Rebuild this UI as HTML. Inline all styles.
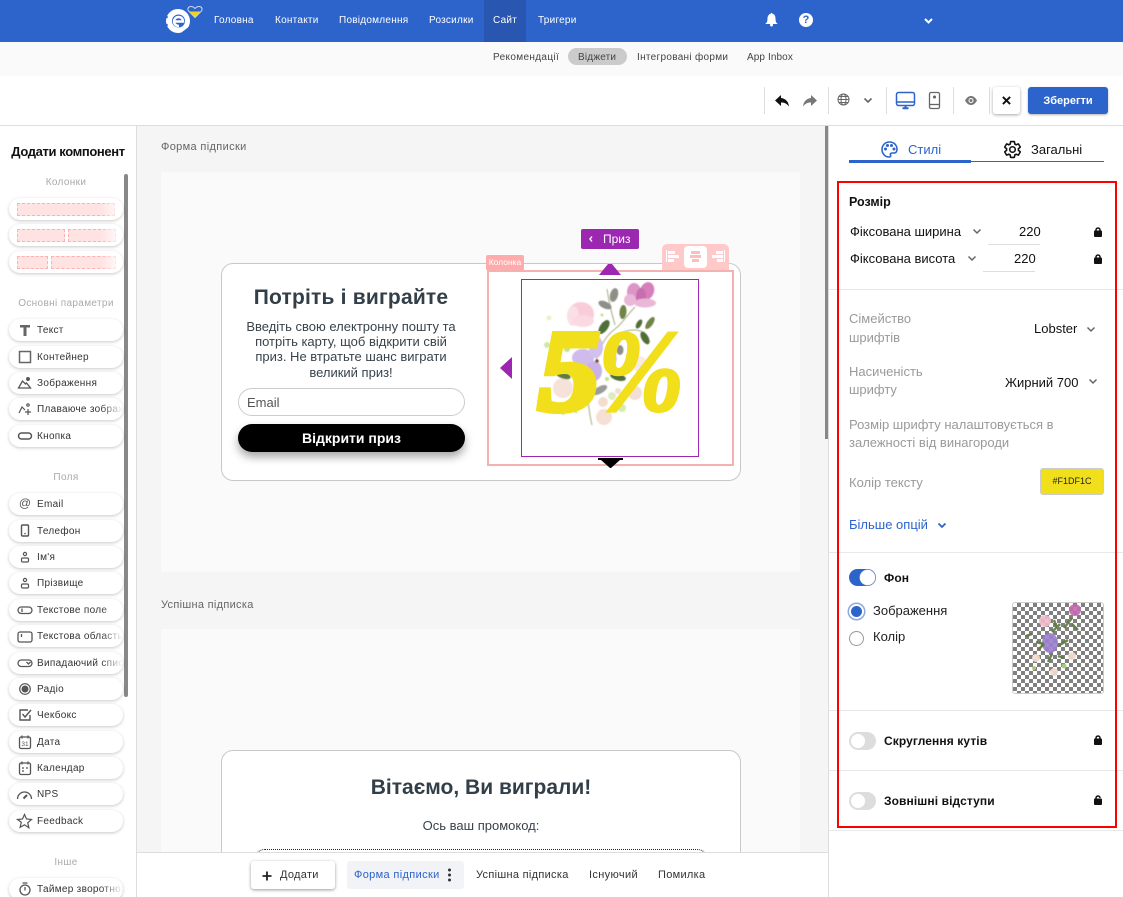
<!DOCTYPE html>
<html lang="uk"><head><meta charset="utf-8"><title>Редактор</title>
<style>
html,body{margin:0;padding:0;width:1123px;height:897px;overflow:hidden;background:#fff;font-family:"Liberation Sans",sans-serif;color:#222}
*{box-sizing:border-box}
#root{position:relative;width:1123px;height:897px;overflow:hidden}
.a{position:absolute}
.t{position:absolute;white-space:nowrap;line-height:1}
.c{transform:translateX(-50%)}
.nav{font-size:10px;color:#fff;top:16px;letter-spacing:.25px}
.sub{font-size:10px;color:#444;top:53px;letter-spacing:.35px}
.pill{position:absolute;left:9px;width:114px;height:22px;border-radius:11px;background:#fff;box-shadow:0 1px 3px rgba(0,0,0,.22);overflow:hidden}
.pill span{position:absolute;left:28px;top:7px;font-size:10px;line-height:1;color:#333;white-space:nowrap;letter-spacing:.3px}
.pill svg{position:absolute;left:8px;top:3px;width:16px;height:16px}
.head{font-size:10px;color:#aaa;left:66px;letter-spacing:.35px}
.col{position:absolute;top:5px;height:13px;background:#ffe3e3;border:1px dashed #ffb0b0}
.fade{position:absolute;right:0;top:0;width:22px;height:22px;background:linear-gradient(90deg,rgba(255,255,255,0),#fff)}
.sep{position:absolute;width:1px;top:87px;height:27px;background:#ddd}
.hr{position:absolute;left:829px;width:294px;height:1px;background:#e8e8e8}
.gray{color:#9a9a9a;font-size:13px}
.sw{position:absolute;left:849px;width:27px;height:18px;border-radius:9px;background:#ddd}
.sw i{position:absolute;left:2px;top:2px;width:14px;height:14px;border-radius:50%;background:#fff}
.bold{font-size:12px;font-weight:bold;color:#111;letter-spacing:.1px}
.b11{font-size:11px;color:#333;top:870px;letter-spacing:.3px}
</style></head><body><div id="root">

<!-- top bar -->
<div class="a" style="left:0;top:0;width:1123px;height:42px;background:#2c64cc"></div>
<div class="a" style="left:484px;top:0;width:42px;height:42px;background:#2856b0"></div>
<svg class="a" style="left:160px;top:3px" width="46" height="34" viewBox="0 0 46 34">
<circle cx="18" cy="18" r="12" fill="#fff"/>
<circle cx="18.500" cy="18" r="6.500" fill="#2c64cc"/>
<path d="M14 18.500h9c0-3-2-4.500-4.500-4.500s-4.500 2-4.500 4.500 2 4.500 5 4.500" fill="none" stroke="#fff" stroke-width="2.400"/>
<circle cx="6.500" cy="14" r="1.300" fill="#2c64cc"/><circle cx="6.500" cy="22" r="1.300" fill="#2c64cc"/>
<path d="M22 30l8-6" stroke="#2c64cc" stroke-width="1.500"/>
<path d="M35 14.500l-6.500-6.500c-1.500-2.500 0-4.500 2.500-4.500 1.800 0 3 .8 4 2 1-1.200 2.200-2 4-2 2.500 0 4 2 2.500 4.500z" fill="#2c64cc" stroke="#cfd8e8" stroke-width="1"/>
<path d="M35 14l-6-5.500h12z" fill="#f1d51c"/>
</svg>
<div class="t nav" style="left:214px">Головна</div>
<div class="t nav" style="left:275px">Контакти</div>
<div class="t nav" style="left:339px">Повідомлення</div>
<div class="t nav" style="left:429px">Розсилки</div>
<div class="t nav" style="left:493px">Сайт</div>
<div class="t nav" style="left:538px">Тригери</div>
<svg class="a" style="left:764px;top:12px" width="15" height="15" viewBox="0 0 15 15"><path d="M1 12c2-1 2.500-3 2.500-5.500S5 2 7 1.500C7 .7 8 .7 8 1.500c2.500.5 3.500 2.500 3.500 5s.5 4.500 2.500 5.500z" fill="#fff"/><circle cx="7.500" cy="13" r="1.500" fill="#fff"/></svg>
<div class="a" style="left:799px;top:13px;width:14px;height:14px;border-radius:50%;background:#fff;color:#2c64cc;font:bold 11px/14px 'Liberation Sans',sans-serif;text-align:center">?</div>
<svg class="a" style="left:923px;top:17px" width="11" height="8" viewBox="0 0 11 8"><path d="M2 2l3.500 3.500L9 2" fill="none" stroke="#fff" stroke-width="2"/></svg>

<!-- sub bar -->
<div class="a" style="left:0;top:42px;width:1123px;height:34px;background:#fafafa"></div>
<div class="a" style="left:568px;top:48px;width:59px;height:17px;border-radius:9px;background:#cbcbcb"></div>
<div class="t sub" style="left:493px">Рекомендації</div>
<div class="t sub" style="left:578px;letter-spacing:.2px">Віджети</div>
<div class="t sub" style="left:637px;letter-spacing:.3px">Інтегровані форми</div>
<div class="t sub" style="left:747px;letter-spacing:.1px">App Inbox</div>

<!-- toolbar -->
<div class="a" style="left:0;top:125px;width:1123px;height:1px;background:#ddd"></div>
<div class="sep" style="left:764px"></div>
<div class="sep" style="left:828px"></div><div class="sep" style="left:886px"></div><div class="sep" style="left:953px"></div>
<div class="sep" style="left:989px"></div>
<svg class="a" style="left:774px;top:94px" width="16" height="14" viewBox="0 0 16 14"><path d="M7 1L1 6.500 7 12V8.500c3 0 5.500.8 8 4-.5-5-3.500-8-8-8.500z" fill="#111"/></svg>
<svg class="a" style="left:802px;top:94px" width="16" height="14" viewBox="0 0 16 14"><path d="M9 1l6 5.500L9 12V8.500c-3 0-5.500.8-8 4 .5-5 3.500-8 8-8.500z" fill="#777"/></svg>
<svg class="a" style="left:837px;top:93px" width="13" height="13" viewBox="0 0 13 13" fill="none" stroke="#666"><circle cx="6.500" cy="6.500" r="5.500"/><ellipse cx="6.500" cy="6.500" rx="2.500" ry="5.500"/><path d="M1 6.500h11M2 3.500h9M2 9.500h9"/></svg>
<svg class="a" style="left:863px;top:97px" width="10" height="7" viewBox="0 0 10 7"><path d="M1.500 1.500l3.500 3.500 3.500-3.500" fill="none" stroke="#666" stroke-width="1.600"/></svg>
<svg class="a" style="left:895px;top:91px" width="21" height="19" viewBox="0 0 21 19" fill="none" stroke="#2c64cc" stroke-width="1.500"><rect x="1.500" y="1.500" width="18" height="13" rx="2"/><path d="M1.500 11h18" /><path d="M7.500 17.300h6M10.500 14.500v3" stroke-width="2"/></svg>
<svg class="a" style="left:928px;top:91px" width="13" height="19" viewBox="0 0 13 19" fill="none" stroke="#666" stroke-width="1.300"><rect x="1.500" y="1.500" width="10" height="16" rx="1.500"/><path d="M1.500 13.500h10"/><circle cx="6.500" cy="6" r=".9" fill="#666"/></svg>
<svg class="a" style="left:964px;top:95px" width="14" height="11" viewBox="0 0 14 11"><path d="M1 5.500C3 2 5 1 7 1s4 1 6 4.500C11 9 9 10 7 10S3 9 1 5.500z" fill="#777"/><circle cx="7" cy="5.500" r="2.500" fill="#fff"/><circle cx="7" cy="5.500" r="1.500" fill="#777"/></svg>
<div class="a" style="left:993px;top:87px;width:27px;height:27px;border-radius:3px;background:#fff;box-shadow:0 1px 3px rgba(0,0,0,.35)"></div>
<svg class="a" style="left:1002px;top:96px" width="9" height="9" viewBox="0 0 10 10"><path d="M1 1l8 8M9 1l-8 8" stroke="#111" stroke-width="2.200"/></svg>
<div class="a" style="left:1028px;top:87px;width:80px;height:27px;border-radius:3px;background:#2c64cc;box-shadow:0 1px 2px rgba(0,0,0,.3);color:#fff;font-size:11px;line-height:29px;text-align:center;font-weight:bold">Зберегти</div>

<!-- canvas -->
<div class="a" style="left:137px;top:126px;width:692px;height:771px;background:#f5f5f5"></div>
<div class="a" style="left:136px;top:126px;width:1px;height:771px;background:#ddd"></div>
<div class="a" style="left:828px;top:126px;width:1px;height:771px;background:#ddd"></div>
<div class="a" style="left:825px;top:126px;width:3px;height:313px;background:#888"></div>
<div class="t" style="left:161px;top:142px;font-size:11px;color:#666;letter-spacing:.35px">Форма підписки</div>
<div class="a" style="left:161px;top:172px;width:639px;height:400px;background:#fafafa"></div>
<div class="t" style="left:161px;top:600px;font-size:11px;color:#666;letter-spacing:.3px">Успішна підписка</div>
<div class="a" style="left:161px;top:629px;width:639px;height:268px;background:#fafafa"></div>

<!-- card 1 -->
<div class="a" style="left:221px;top:263px;width:520px;height:218px;background:#fff;border:1px solid #c8c8c8;border-radius:12px"></div>
<div class="t c" style="left:351px;top:287px;font-size:21px;font-weight:bold;color:#333f48;letter-spacing:.2px">Потріть і виграйте</div>
<div class="a c" style="left:351px;top:319px;width:230px;text-align:center;font-size:13px;line-height:15.200px;color:#38434c">Введіть свою електронну пошту та<br>потріть карту, щоб відкрити свій<br>приз. Не втратьте шанс виграти<br>великий приз!</div>
<div class="a" style="left:238px;top:388px;width:227px;height:28px;border:1px solid #ccc;border-radius:14px;background:#fff"></div>
<div class="t" style="left:247px;top:396px;font-size:13px;color:#555">Email</div>
<div class="a" style="left:238px;top:424px;width:227px;height:28px;border-radius:14px;background:#000;box-shadow:0 5px 9px rgba(0,0,0,.35);color:#fff;font-size:14px;font-weight:bold;text-align:center;line-height:28px">Відкрити приз</div>

<!-- selection -->
<div class="a" style="left:487px;top:270px;width:247px;height:196px;border:2px solid #f5b0b0"></div>
<div class="a" style="left:486px;top:255px;width:38px;height:15px;background:#ffabab;border-radius:2px 2px 0 0;color:#fff;font-size:8.500px;line-height:15px;text-align:center">Колонка</div>
<div class="a" style="left:662px;top:244px;width:67px;height:26px;background:#ffc9c9;border-radius:5px 5px 0 0"></div>
<div class="a" style="left:684px;top:246px;width:23px;height:22px;background:#fff;border-radius:4px"></div>
<svg class="a" style="left:666px;top:250px" width="60" height="14" viewBox="0 0 60 14"><g fill="#fff"><rect x="0" y="0" width="1" height="12"/><rect x="2" y="1" width="7" height="3"/><rect x="2" y="5" width="11" height="3"/><rect x="2" y="9" width="6" height="3"/><rect x="58" y="0" width="1" height="12"/><rect x="50" y="1" width="7" height="3"/><rect x="46" y="5" width="11" height="3"/><rect x="51" y="9" width="6" height="3"/></g><g fill="#ffbcbc"><rect x="25" y="1" width="9" height="3"/><rect x="24" y="5" width="11" height="3"/><rect x="26" y="9" width="7" height="3"/></g></svg>
<div class="a" style="left:581px;top:229px;width:58px;height:20px;background:#9c27b0;border-radius:2px;color:#fff;font-size:12px;line-height:20px;padding-left:22px;">Приз</div>
<svg class="a" style="left:588px;top:235px" width="6" height="8" viewBox="0 0 6 8"><path d="M4 1.500L2 4l2 2.500" fill="none" stroke="#fff" stroke-width="1.400"/></svg>

<!-- image -->
<svg class="a" style="left:521px;top:279px" width="178" height="178" viewBox="0 0 178 178">
<rect x=".5" y=".5" width="177" height="177" fill="#fff" stroke="#9c27b0"/>
<defs><filter id="b" x="-10%" y="-10%" width="120%" height="120%"><feGaussianBlur stdDeviation=".5"/></filter></defs>
<g filter="url(#b)">
<circle cx="28" cy="39" r="2.500" fill="#e6f2cc"/><circle cx="26" cy="66" r="3" fill="#cfe8a8"/><circle cx="46" cy="70" r="3" fill="#c3e28a"/><circle cx="81" cy="36" r="1.500" fill="#c3e28a"/>
<circle cx="86" cy="100" r="2" fill="#c3e28a"/><circle cx="91" cy="117" r="4" fill="#dcecc0"/><circle cx="101" cy="129" r="4" fill="#d5eab0"/><circle cx="42" cy="133" r="3" fill="#d5eab0"/><circle cx="55" cy="133" r="1.500" fill="#cfe8a8"/>
<circle cx="114" cy="114" r="7" fill="#f4dfd4"/><circle cx="82" cy="123" r="5" fill="#f3ddd0"/><circle cx="83" cy="138" r="8" fill="#f5e0d5"/><circle cx="97" cy="112" r="3" fill="#f3ddd0"/><circle cx="42" cy="109" r="10" fill="#f6e2d8"/><circle cx="118" cy="85" r="8" fill="#f8ebe5"/>
<path d="M67 122c1 8 2 16 4 24M72 100c2-20 8-40 22-50 8-6 12-14 20-22M86 10c2 14 4 22 8 36M94 56c10-4 20-8 30-2" stroke="#a8ab80" fill="none"/>
<ellipse cx="93" cy="16" rx="4" ry="7" transform="rotate(15 93 16)" fill="#8d8f88"/>
<ellipse cx="84" cy="26" rx="7" ry="3.500" transform="rotate(25 84 26)" fill="#8d8f88"/>
<ellipse cx="102" cy="33" rx="3.500" ry="7" transform="rotate(5 102 33)" fill="#6f8446"/>
<ellipse cx="83" cy="48" rx="4" ry="8" transform="rotate(35 83 48)" fill="#4f6e38"/>
<ellipse cx="118" cy="45" rx="2.500" ry="5" transform="rotate(30 118 45)" fill="#4f6e38"/>
<ellipse cx="129" cy="44" rx="3" ry="7" transform="rotate(35 129 44)" fill="#6f8446"/>
<ellipse cx="124" cy="59" rx="3.500" ry="7" transform="rotate(-30 124 59)" fill="#4f6e38"/>
<ellipse cx="99" cy="71" rx="3.500" ry="5" fill="#8d8f88"/>
<ellipse cx="97" cy="98" rx="8" ry="3.500" transform="rotate(15 97 98)" fill="#4f6e38"/>
<ellipse cx="79" cy="111" rx="8" ry="3.500" transform="rotate(-30 79 111)" fill="#9a9c9a"/>
<ellipse cx="42" cy="96" rx="8" ry="3.500" transform="rotate(20 42 96)" fill="#5e7c3c"/>
<ellipse cx="60" cy="35" rx="13" ry="12" fill="#f8cdd8"/><ellipse cx="52" cy="37" rx="6" ry="10" fill="#fbdfe6"/><ellipse cx="62" cy="42" rx="11" ry="6" fill="#fad9e2"/>
<ellipse cx="113" cy="13" rx="7" ry="9" fill="#dd95c8"/><ellipse cx="126" cy="12" rx="7" ry="9" transform="rotate(20 126 12)" fill="#d77fbc"/><ellipse cx="120" cy="18" rx="5" ry="9" fill="#c86daf"/><ellipse cx="124" cy="24" rx="11" ry="4.500" fill="#ebb7d6"/><ellipse cx="109" cy="21" rx="6" ry="6" fill="#e8b8d6"/>
<ellipse cx="62" cy="79" rx="11" ry="9" fill="#cfbcec"/><ellipse cx="75" cy="68" rx="7" ry="11" fill="#d2c0ee"/><ellipse cx="73" cy="92" rx="8" ry="10" fill="#c8b2e7"/><ellipse cx="90" cy="80" rx="6" ry="7" fill="#dccff2"/><circle cx="76" cy="82" r="1.800" fill="#8a4a2a"/>
</g>
<text x="17" y="131" font-family="Liberation Serif,serif" font-weight="bold" font-style="italic" font-size="116" fill="#f1df1c" stroke="#f1df1c" stroke-width="6" textLength="62" lengthAdjust="spacingAndGlyphs">5</text>
<text x="77" y="131" font-family="Liberation Serif,serif" font-weight="bold" font-style="italic" font-size="116" fill="#f1df1c" stroke="#f1df1c" stroke-width="3" textLength="86" lengthAdjust="spacingAndGlyphs">%</text>
</svg>
<svg class="a" style="left:599px;top:263px" width="22" height="12" viewBox="0 0 22 12"><path d="M0 12L9 1h4l9 11z" fill="#9c27b0"/></svg>
<svg class="a" style="left:500px;top:357px" width="12" height="22" viewBox="0 0 12 22"><path d="M12 0v22L0 11z" fill="#9c27b0"/></svg>
<svg class="a" style="left:598px;top:458px" width="25" height="11" viewBox="0 0 25 11"><path d="M0 0h25v2h-3l-9 8h-1L3 2H0z" fill="#000"/></svg>

<!-- card 2 -->
<div class="a" style="left:221px;top:750px;width:520px;height:140px;background:#fff;border:1px solid #c8c8c8;border-radius:12px"></div>
<div class="t c" style="left:481px;top:777px;font-size:21px;font-weight:bold;color:#333f48">Вітаємо, Ви виграли!</div>
<div class="t c" style="left:481px;top:819px;font-size:13px;color:#38434c">Ось ваш промокод:</div>
<div class="a" style="left:253px;top:849px;width:456px;height:40px;border:1px dotted #222;border-radius:12px"></div>

<!-- bottom bar -->
<div class="a" style="left:137px;top:852px;width:691px;height:45px;background:#fff;border-top:1px solid #ddd"></div>
<div class="a" style="left:251px;top:861px;width:84px;height:28px;border-radius:3px;background:#fff;box-shadow:0 1px 3px rgba(0,0,0,.4)"></div>
<svg class="a" style="left:262px;top:871px" width="10" height="10" viewBox="0 0 10 10"><path d="M5 .5v9M.5 5h9" stroke="#222" stroke-width="1.800"/></svg>
<div class="t b11" style="left:280px">Додати</div>
<div class="a" style="left:347px;top:861px;width:117px;height:28px;border-radius:3px;background:#f1f3f6"></div>
<div class="t b11" style="left:354px;color:#2c64cc;letter-spacing:.35px">Форма підписки</div>
<svg class="a" style="left:447px;top:868px" width="5" height="14" viewBox="0 0 5 14"><g fill="#333"><circle cx="2.500" cy="2" r="1.500"/><circle cx="2.500" cy="7" r="1.500"/><circle cx="2.500" cy="12" r="1.500"/></g></svg>
<div class="t b11" style="left:476px">Успішна підписка</div>
<div class="t b11" style="left:589px;letter-spacing:.35px">Існуючий</div>
<div class="t b11" style="left:658px">Помилка</div>

<!-- left panel -->
<div class="t c" style="left:68px;top:145px;font-size:13px;font-weight:bold;color:#111;letter-spacing:-.38px">Додати компонент</div>
<div class="a" style="left:124px;top:174px;width:4px;height:523px;background:#888;border-radius:2px"></div>
<div class="t c head" style="top:178px">Колонки</div>
<div class="pill" style="top:198px"><div class="col" style="left:8px;width:98px"></div><div class="fade"></div></div>
<div class="pill" style="top:224px"><div class="col" style="left:8px;width:48px"></div><div class="col" style="left:59px;width:48px"></div><div class="fade"></div></div>
<div class="pill" style="top:251px"><div class="col" style="left:8px;width:31px"></div><div class="col" style="left:42px;width:65px"></div><div class="fade"></div></div>
<div class="t c head" style="top:299px">Основні параметри</div>

<div class="pill" style="top:319px"><svg viewBox="0 0 16 16"><path d="M3 3h10v2.500H9.500V14h-3V5.500H3z" fill="#666"/></svg><span>Текст</span></div>
<div class="pill" style="top:346px"><svg viewBox="0 0 16 16"><rect x="2.500" y="2.500" width="11" height="11" fill="none" stroke="#666" stroke-width="1.500"/></svg><span>Контейнер</span></div>
<div class="pill" style="top:372px"><svg viewBox="0 0 16 16" fill="none" stroke="#555" stroke-width="1.300"><path d="M1.500 13l4-7 3 3 1-1 4 5z"/><circle cx="11" cy="4" r="1.300" fill="#555"/></svg><span>Зображення</span></div>
<div class="pill" style="top:398px"><svg viewBox="0 0 16 16" fill="none" stroke="#555" stroke-width="1.200"><path d="M2 12l3-6 3 3"/><circle cx="11" cy="4" r="1.200"/><path d="M11 8v6M8 11h6"/></svg><span>Плаваюче зображення</span><div class="fade"></div></div>
<div class="pill" style="top:425px"><svg viewBox="0 0 16 16"><rect x="1.500" y="5" width="13" height="6" rx="3" fill="none" stroke="#555" stroke-width="1.500"/></svg><span>Кнопка</span></div>

<div class="t c head" style="top:473px">Поля</div>
<div class="pill" style="top:493px"><svg viewBox="0 0 16 16"><text x="8" y="11" text-anchor="middle" font-family="Liberation Sans,sans-serif" font-size="12" fill="#555">@</text></svg><span>Email</span></div>
<div class="pill" style="top:520px"><svg viewBox="0 0 16 16"><rect x="4.500" y="2" width="7" height="11" rx="1" fill="none" stroke="#555" stroke-width="1.400"/><circle cx="8" cy="10.500" r=".8" fill="#555"/></svg><span>Телефон</span></div>
<div class="pill" style="top:546px"><svg viewBox="0 0 16 16" fill="none" stroke="#555" stroke-width="1.200"><circle cx="8" cy="5" r="1.600"/><rect x="4.500" y="9" width="7" height="4" rx="1.200"/></svg><span>Ім'я</span></div>
<div class="pill" style="top:572px"><svg viewBox="0 0 16 16" fill="none" stroke="#555" stroke-width="1.200"><circle cx="8" cy="5" r="1.600"/><rect x="4.500" y="9" width="7" height="4" rx="1.200"/></svg><span>Прізвище</span></div>
<div class="pill" style="top:599px"><svg viewBox="0 0 16 16" fill="none" stroke="#555" stroke-width="1.300"><rect x="1" y="5" width="14" height="6.500" rx="3.200"/><path d="M5 6.500v3.500"/></svg><span>Текстове поле</span><div class="fade"></div></div>
<div class="pill" style="top:625px"><svg viewBox="0 0 16 16" fill="none" stroke="#555" stroke-width="1.300"><rect x="1" y="4" width="14" height="10" rx="2"/><path d="M4.500 6v3"/></svg><span>Текстова область</span><div class="fade"></div></div>
<div class="pill" style="top:652px"><svg viewBox="0 0 16 16" fill="none" stroke="#555" stroke-width="1.300"><rect x="1" y="5" width="14" height="6.500" rx="3.200"/><path d="M9.500 7l2 2 2-2"/></svg><span>Випадаючий список</span><div class="fade"></div></div>
<div class="pill" style="top:678px"><svg viewBox="0 0 16 16"><circle cx="8" cy="8" r="5.300" fill="none" stroke="#555" stroke-width="1.200"/><circle cx="8" cy="8" r="3.500" fill="#555"/></svg><span>Радіо</span></div>
<div class="pill" style="top:704px"><svg viewBox="0 0 16 16" fill="none" stroke="#555" stroke-width="1.400"><path d="M13 8v5H3V3h8"/><path d="M5.500 7l2.500 3 6-7"/></svg><span>Чекбокс</span></div>
<div class="pill" style="top:731px"><svg viewBox="0 0 16 16"><rect x="2.500" y="3" width="11" height="11.500" rx="1.500" fill="none" stroke="#555" stroke-width="1.300"/><path d="M5 1.500v3M11 1.500v3" stroke="#555" stroke-width="1.300"/><text x="8" y="12" text-anchor="middle" font-size="6.500" font-family="Liberation Sans,sans-serif" fill="#555">31</text></svg><span>Дата</span></div>
<div class="pill" style="top:757px"><svg viewBox="0 0 16 16"><rect x="2.500" y="3" width="11" height="11.500" rx="1.500" fill="none" stroke="#555" stroke-width="1.300"/><path d="M5 1.500v3M5 8h2M9 8h2M5 11h2M11 1.500v3" stroke="#555" stroke-width="1.300"/></svg><span>Календар</span></div>
<div class="pill" style="top:783px"><svg viewBox="0 0 16 16" fill="none" stroke="#555" stroke-width="1.300" style="left:7px;width:17px"><path d="M1 13a7 7 0 0 1 14 0"/><path d="M7 12.500L10.500 9" stroke-width="2"/></svg><span>NPS</span></div>
<div class="pill" style="top:810px"><svg viewBox="0 0 16 16" style="left:7px;width:17px"><path d="M8 1.500l2 4.500 5 .5-3.800 3.300 1.200 5L8 11.800 3.600 14.300l1.200-5L1 6.500l5-.5z" fill="none" stroke="#555" stroke-width="1.200"/></svg><span>Feedback</span></div>
<div class="t c head" style="top:858px">Інше</div>
<div class="pill" style="top:878px"><svg viewBox="0 0 16 16" fill="none" stroke="#555" stroke-width="1.300"><circle cx="8" cy="9" r="5"/><path d="M5.500 2h5M8 6v3.500" /></svg><span>Таймер зворотного</span><div class="fade"></div></div>

<!-- right panel tabs -->
<svg class="a" style="left:881px;top:141px" width="17" height="17" viewBox="0 0 17 17"><path d="M8.500 1C4 1 1 4.500 1 8.500S4 16 8 16c1.500 0 2-1 1.500-2-.5-1.200.3-2 1.500-2h2c2 0 3-1.500 3-3.500C16 4 13 1 8.500 1z" fill="none" stroke="#2c64cc" stroke-width="1.600"/><g fill="#2c64cc"><circle cx="4.500" cy="8" r="1.500"/><circle cx="6.500" cy="4.500" r="1.500"/><circle cx="10.500" cy="4.500" r="1.500"/><circle cx="13" cy="8" r="1.500"/></g></svg>
<div class="t" style="left:908px;top:143px;font-size:13px;color:#2c64cc">Стилі</div>
<svg class="a" style="left:1003px;top:140px" width="19" height="19" viewBox="0 0 24 24" fill="none" stroke="#111" stroke-width="2"><path d="M19.430 12.980c.04-.32.07-.64.07-.98s-.03-.66-.07-.98l2.110-1.650c.19-.15.24-.42.12-.64l-2-3.460c-.12-.22-.39-.3-.61-.22l-2.490 1c-.52-.4-1.080-.73-1.690-.98l-.38-2.650C14.460 2.180 14.250 2 14 2h-4c-.25 0-.46.18-.49.42l-.38 2.650c-.61.25-1.170.59-1.690.98l-2.490-1c-.23-.09-.49 0-.61.22l-2 3.460c-.13.22-.07.49.12.64l2.110 1.650c-.04.32-.07.65-.07.98s.03.66.07.98l-2.110 1.650c-.19.15-.24.42-.12.64l2 3.460c.12.22.39.3.61.22l2.490-1c.52.4 1.080.73 1.690.98l.38 2.650c.03.24.24.42.49.42h4c.25 0 .46-.18.49-.42l.38-2.650c.61-.25 1.170-.59 1.690-.98l2.490 1c.23.09.49 0 .61-.22l2-3.460c.12-.22.07-.49-.12-.64l-2.110-1.650z"/><circle cx="12" cy="12" r="3.500"/></svg>
<div class="t" style="left:1031px;top:143px;font-size:13px;color:#111">Загальні</div>
<div class="a" style="left:849px;top:161px;width:255px;height:1px;background:#2c64cc"></div>
<div class="a" style="left:849px;top:160px;width:122px;height:3px;background:#2c64cc"></div>

<!-- dividers -->
<div class="hr" style="top:289px"></div><div class="hr" style="top:552px"></div><div class="hr" style="top:710px"></div><div class="hr" style="top:770px"></div><div class="hr" style="top:830px"></div>

<!-- right panel content -->
<div class="t" style="left:849px;top:196px;font-size:12.500px;font-weight:bold;color:#111">Розмір</div>
<div class="t" style="left:850px;top:225px;font-size:13px;color:#111">Фіксована ширина</div>
<svg class="a" style="left:972px;top:228px" width="10" height="7" viewBox="0 0 10 7"><path d="M1.500 1.500l3.500 3.500 3.500-3.500" fill="none" stroke="#666" stroke-width="1.500"/></svg>
<div class="t" style="left:1019px;top:225px;font-size:13px;color:#111">220</div>
<div class="a" style="left:988px;top:244px;width:52px;height:1px;background:#ddd"></div>
<svg class="a" style="left:1094px;top:227px" width="8" height="10" viewBox="0 0 8 10"><rect x="0" y="3.500" width="8" height="6.500" rx="1" fill="#111"/><path d="M2 4.500V3a2 2 0 0 1 4 0v1.500" fill="none" stroke="#111" stroke-width="1.500"/></svg>
<div class="t" style="left:850px;top:252px;font-size:13px;color:#111">Фіксована висота</div>
<svg class="a" style="left:967px;top:255px" width="10" height="7" viewBox="0 0 10 7"><path d="M1.500 1.500l3.500 3.500 3.500-3.500" fill="none" stroke="#666" stroke-width="1.500"/></svg>
<div class="t" style="left:1014px;top:252px;font-size:13px;color:#111">220</div>
<div class="a" style="left:983px;top:271px;width:52px;height:1px;background:#ddd"></div>
<svg class="a" style="left:1094px;top:254px" width="8" height="10" viewBox="0 0 8 10"><rect x="0" y="3.500" width="8" height="6.500" rx="1" fill="#111"/><path d="M2 4.500V3a2 2 0 0 1 4 0v1.500" fill="none" stroke="#111" stroke-width="1.500"/></svg>

<div class="t gray" style="left:849px;top:312px">Сімейство</div>
<div class="t gray" style="left:849px;top:331px">шрифтів</div>
<div class="t" style="left:1034px;top:322px;font-size:13px;color:#111">Lobster</div>
<svg class="a" style="left:1086px;top:326px" width="10" height="7" viewBox="0 0 10 7"><path d="M1.500 1.500l3.500 3.500 3.500-3.500" fill="none" stroke="#666" stroke-width="1.500"/></svg>
<div class="t gray" style="left:849px;top:365px">Насиченість</div>
<div class="t gray" style="left:849px;top:383px">шрифту</div>
<div class="t" style="left:1005px;top:376px;font-size:13px;color:#111">Жирний 700</div>
<svg class="a" style="left:1088px;top:378px" width="10" height="7" viewBox="0 0 10 7"><path d="M1.500 1.500l3.500 3.500 3.500-3.500" fill="none" stroke="#666" stroke-width="1.500"/></svg>
<div class="t gray" style="left:849px;top:418px">Розмір шрифту налаштовується в</div>
<div class="t gray" style="left:849px;top:436px">залежності від винагороди</div>
<div class="t gray" style="left:849px;top:476px">Колір тексту</div>
<div class="a" style="left:1040px;top:468px;width:64px;height:27px;background:#f1df1c;border:1px solid #ccc;border-radius:3px;font-size:9px;line-height:25px;text-align:center;color:#222">#F1DF1C</div>
<div class="t" style="left:849px;top:518px;font-size:13px;color:#2c64cc">Більше опцій</div>
<svg class="a" style="left:937px;top:522px" width="10" height="7" viewBox="0 0 10 7"><path d="M1.500 1.500l3.500 3.500 3.500-3.500" fill="none" stroke="#2c64cc" stroke-width="1.800"/></svg>

<div class="sw" style="top:569px;height:17px;background:#2c64cc"><i style="left:11px;top:1px;width:15px;height:15px;box-shadow:0 0 0 .5px #bcd"></i></div>
<div class="t bold" style="left:884px;top:572px">Фон</div>
<div class="a" style="left:849px;top:604px;width:15px;height:15px;border-radius:50%;background:#2c64cc;border:2px solid #fff;box-shadow:0 0 0 1.500px #8fa9dd"></div>
<div class="t" style="left:873px;top:604px;font-size:13px;color:#222">Зображення</div>
<div class="a" style="left:849px;top:631px;width:15px;height:15px;border-radius:50%;background:#fff;border:1px solid #999"></div>
<div class="t" style="left:873px;top:630px;font-size:13px;color:#222">Колір</div>
<div class="a" style="left:1012px;top:602px;width:92px;height:92px;border-radius:3px;border:1px solid #ccc;background:repeating-conic-gradient(#808080 0 25%,#fff 0 50%) 0 0/8px 8px"></div>
<svg class="a" style="left:1012px;top:602px" width="92" height="92" viewBox="0 0 92 92"><g opacity=".9"><circle cx="33" cy="19" r="6" fill="#efbccb"/><circle cx="63" cy="8" r="6" fill="#c46ab0"/><ellipse cx="38" cy="41" rx="8" ry="10" fill="#9c7fd0"/><path d="M40 30l8-8M52 26l8-10M60 22l6 6M14 34l6-2M44 24l-2-6M24 40l8 2M26 48l6-6M46 44l10-6M36 60l4-8M46 54l6 2" stroke="#5e7c3c" stroke-width="2.500" fill="none"/><circle cx="42" cy="70" r="4" fill="#f3dcd0"/><circle cx="60" cy="54" r="4" fill="#f3dcd0"/><circle cx="24" cy="56" r="4" fill="#f3dcd0"/><circle cx="52" cy="64" r="2.500" fill="#a8d070"/><circle cx="22" cy="66" r="2" fill="#a8d070"/></g></svg>

<div class="sw" style="top:732px"><i></i></div>
<div class="t bold" style="left:884px;top:735px">Скруглення кутів</div>
<svg class="a" style="left:1094px;top:735px" width="8" height="10" viewBox="0 0 8 10"><rect x="0" y="3.500" width="8" height="6.500" rx="1" fill="#111"/><path d="M2 4.500V3a2 2 0 0 1 4 0v1.500" fill="none" stroke="#111" stroke-width="1.500"/></svg>
<div class="sw" style="top:792px"><i></i></div>
<div class="t bold" style="left:884px;top:795px">Зовнішні відступи</div>
<svg class="a" style="left:1094px;top:795px" width="8" height="10" viewBox="0 0 8 10"><rect x="0" y="3.500" width="8" height="6.500" rx="1" fill="#111"/><path d="M2 4V3a2 2 0 0 1 4 0" fill="none" stroke="#111" stroke-width="1.500"/></svg>

<div class="a" style="left:837px;top:181px;width:280px;height:647px;border:2px solid #f00;pointer-events:none"></div>
</div></body></html>
